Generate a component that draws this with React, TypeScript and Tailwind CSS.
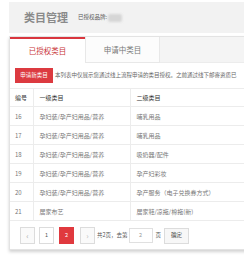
export default function App() {
  const rows = [
    { id: 16, a: '孕妇装/孕产妇用品/营养', b: '哺乳用品' },
    { id: 17, a: '孕妇装/孕产妇用品/营养', b: '哺乳用品' },
    { id: 18, a: '孕妇装/孕产妇用品/营养', b: '吸奶器/配件' },
    { id: 19, a: '孕妇装/孕产妇用品/营养', b: '孕产妇彩妆' },
    { id: 20, a: '孕妇装/孕产妇用品/营养', b: '孕产服务（电子兑换券方式）' },
    { id: 21, a: '居家布艺', b: '居家鞋/凉拖/棉拖(新)' },
  ];

  return (
    <div
      className="w-[244px] h-[259px] overflow-hidden bg-white pt-[2px] pl-[9px]"
      style={{ fontFamily: '"Noto Sans CJK SC", "Liberation Sans", sans-serif' }}
    >
      {/* header */}
      <div className="flex h-[31px] items-center bg-[#f2f2f2] pl-[15px]">
        <span className="text-[11px] font-bold leading-none text-[#8a8a8a]">类目管理</span>
        <span className="ml-[10px] text-[5.5px] leading-none text-[#555]">已授权品牌:</span>
        <span className="ml-[1px] h-[8px] w-[14px] rounded-[2px] bg-[#d6d6d6] blur-[1px]" />
      </div>

      {/* card */}
      <div className="mt-[3px] h-[214px] w-[260px] border border-[#e3e3e3] bg-white shadow-[0_2px_3px_rgba(0,0,0,0.18)]">
        <div className="flex h-[26px]">
          <div className="flex w-[75px] items-center justify-center border-t-2 border-[#d9363e] bg-white text-[7.5px] text-[#c9353b]">
            已授权类目
          </div>
          <div className="flex w-[75px] items-center justify-center border-x border-b border-[#e8e8e8] bg-[#fcfcfc] text-[7.5px] text-[#777]">
            申请中类目
          </div>
          <div className="flex-1 border-b border-[#ececec] bg-[#f4f4f4]" />
        </div>

        <div className="mt-[5px] flex w-[234px] items-center overflow-hidden pl-[5px]">
          <div className="flex h-[15px] w-[38px] shrink-0 items-center justify-center bg-[#dc3a40] text-[5.5px] text-white">
            申请新类目
          </div>
          <span className="ml-[2px] whitespace-nowrap text-[5.5px] text-[#666]">
            本列表中仅展示您通过线上流程申请的类目授权。之前通过线下邮寄资质已
          </span>
        </div>

        <table className="mt-[5px] w-full border-collapse text-[6px] text-[#777]">
          <thead>
            <tr className="h-[18px] border-y border-[#ececec] text-[#333]">
              <th className="w-[23px] border-r border-[#ececec] pl-[5px] text-left font-normal">编号</th>
              <th className="w-[97px] border-r border-[#ececec] pl-[6px] text-left font-normal">一级类目</th>
              <th className="pl-[6px] text-left font-normal">二级类目</th>
            </tr>
          </thead>
          <tbody>
            {rows.map((r) => (
              <tr key={r.id} className="h-[19px] border-b border-[#ececec]">
                <td className="border-r border-[#ececec] pl-[5px]">{r.id}</td>
                <td className="border-r border-[#ececec] pl-[6px]">{r.a}</td>
                <td className="pl-[6px] whitespace-nowrap">{r.b}</td>
              </tr>
            ))}
          </tbody>
        </table>

        <div className="mt-[6px] flex items-center pl-[10px] text-[5.5px] text-[#555]">
          <div className="flex h-[17px] w-[15px] items-center justify-center border border-[#dcdcdc] bg-[#fafafa] text-[8px] text-[#aaa]">
            ‹
          </div>
          <div className="ml-[4px] flex h-[17px] w-[15px] items-center justify-center border border-[#dcdcdc] bg-white text-[#555]">
            1
          </div>
          <div className="ml-[5px] flex h-[17px] w-[15px] items-center justify-center bg-[#e0393e] text-white">
            2
          </div>
          <div className="ml-[6px] flex h-[17px] w-[15px] items-center justify-center border border-[#dcdcdc] bg-[#fafafa] text-[8px] text-[#bbb]">
            ›
          </div>
          <span className="ml-[2px]">共2页，去第</span>
          <div className="ml-[1px] flex h-[15px] w-[24px] items-center justify-center border border-[#e0e0e0] bg-white text-[#999]">
            2
          </div>
          <span className="ml-[3px]">页</span>
          <div className="ml-[3px] flex h-[16px] w-[25px] items-center justify-center border border-[#dcdcdc] bg-[#f7f7f7] text-[#444]">
            确定
          </div>
        </div>
      </div>
    </div>
  );
}
